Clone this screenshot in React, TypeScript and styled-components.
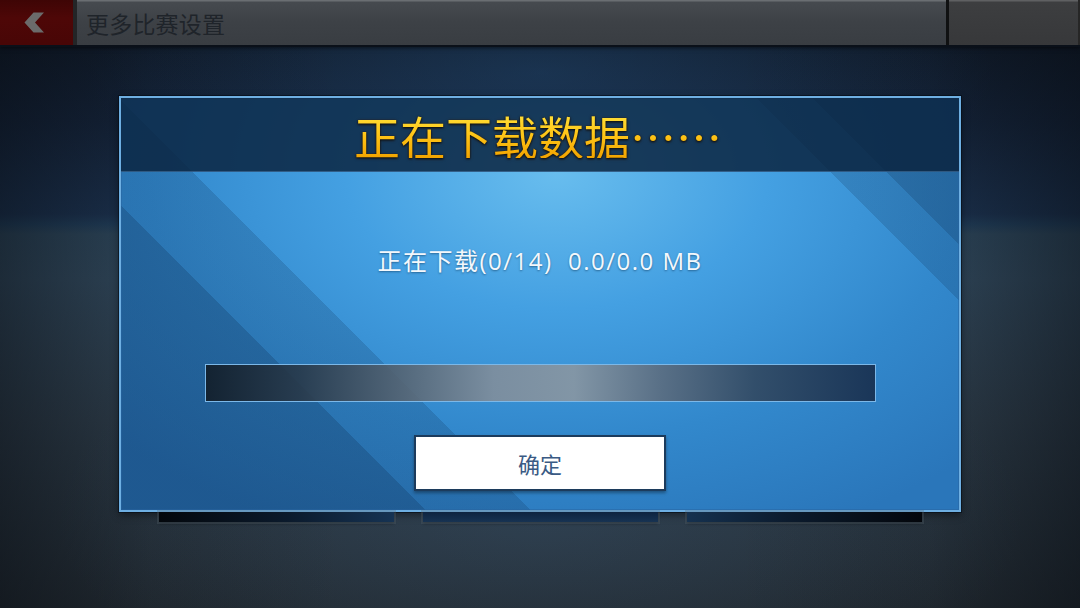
import React from "react";
import styled, { createGlobalStyle } from "styled-components";

const GlobalStyle = createGlobalStyle`
  html, body {
    margin: 0;
    padding: 0;
    width: 1080px;
    height: 608px;
    overflow: hidden;
  }
  body {
    font-family: "Noto Sans CJK SC", "Noto Sans", sans-serif;
    background: #121c28;
  }
`;

const CJK = `"Noto Sans CJK SC", "Noto Sans", sans-serif`;
const MIXED = `"Open Sans", "Noto Sans CJK SC", sans-serif`;

const Screen = styled.div`
  width: 1080px;
  height: 608px;
  display: flex;
  flex-direction: column;
  background:
    linear-gradient(
      90deg,
      rgba(6, 10, 16, 0.5) 0%,
      rgba(6, 10, 16, 0.12) 14%,
      rgba(6, 10, 16, 0) 32%,
      rgba(6, 10, 16, 0) 68%,
      rgba(6, 10, 16, 0.12) 86%,
      rgba(6, 10, 16, 0.5) 100%
    ),
    radial-gradient(ellipse 42% 26% at 50% 12%, rgba(40, 90, 140, 0.35), rgba(40, 90, 140, 0) 100%),
    radial-gradient(ellipse 45% 35% at 50% 85%, rgba(70, 110, 150, 0.22), rgba(70, 110, 150, 0) 100%),
    linear-gradient(
      180deg,
      #0e1621 0px,
      #15243a 120px,
      #1d3452 214px,
      #22405d 224px,
      #304a5f 234px,
      #344c60 280px,
      #2f3e4b 420px,
      #222a31 608px
    );
`;

/* ---------- top navigation bar ---------- */

const TopBar = styled.header`
  height: 45px;
  flex: none;
  display: flex;
  border-bottom: 2px solid #0a1019;
  box-shadow: 0 1px 4px rgba(0, 0, 0, 0.55);
`;

const BackButton = styled.button`
  width: 77px;
  box-sizing: border-box;
  margin: 0;
  padding: 0 0 0 24px;
  display: flex;
  align-items: center;
  border: none;
  border-right: 4px solid #232527;
  background: linear-gradient(180deg, #3e0505 0%, #4e0707 40%, #480606 100%);
  cursor: pointer;
`;

const TitleBar = styled.div`
  flex: 1;
  display: flex;
  align-items: center;
  padding-left: 9px;
  background: linear-gradient(180deg, #6a6e72 0, #6a6e72 1px, #464a4f 2px, #3d4146 50%, #393d42 100%);
  font-family: ${CJK};
  font-size: 23px;
  color: #1f242a;
  letter-spacing: 0.2px;
`;

const CornerBox = styled.div`
  width: 129px;
  border-left: 3px solid #101112;
  border-right: 2px solid #262626;
  background: linear-gradient(180deg, #5f6062 0, #5f6062 1px, #3d3e40 2px, #37383a 100%);
`;

/* ---------- dialog ---------- */

const Stage = styled.main`
  flex: 1;
  display: flex;
  flex-direction: column;
  align-items: center;
  padding-top: 49px;
`;

const Dialog = styled.section`
  width: 842px;
  height: 416px;
  box-sizing: border-box;
  border: 2px solid #6eafe2;
  display: flex;
  flex-direction: column;
  box-shadow:
    0 0 0 1px rgba(4, 12, 22, 0.6),
    0 3px 8px rgba(0, 0, 0, 0.45),
    inset 0 0 0 1px rgba(40, 100, 160, 0.5);
  background:
    linear-gradient(
      45deg,
      rgba(8, 32, 64, 0.34) 0%,
      rgba(8, 32, 64, 0.34) 24.4%,
      rgba(8, 32, 64, 0.17) 24.4%,
      rgba(8, 32, 64, 0.17) 32.8%,
      rgba(8, 32, 64, 0) 32.8%,
      rgba(8, 32, 64, 0) 83.8%,
      rgba(8, 32, 64, 0.17) 83.8%,
      rgba(8, 32, 64, 0.17) 88.3%,
      rgba(8, 32, 64, 0.32) 88.3%,
      rgba(8, 32, 64, 0.32) 100%
    ),
    radial-gradient(
      ellipse 72% 95% at 52% 18%,
      #68bdee 0%,
      #44a0e2 35%,
      #3288cc 68%,
      #2a76ba 100%
    );
`;

const DialogHeader = styled.div`
  height: 74px;
  flex: none;
  box-sizing: border-box;
  display: flex;
  align-items: center;
  justify-content: center;
  background: rgba(10, 34, 62, 0.84);
  border-bottom: 1px solid rgba(110, 170, 225, 0.35);
`;

const HeaderTitle = styled.h1`
  margin: 0 0 0 -4px;
  font-family: ${CJK};
  font-weight: 400;
  font-size: 46px;
  line-height: 1;
  background: linear-gradient(180deg, #ffe23c 0%, #ffc81a 45%, #f2a400 100%);
  -webkit-background-clip: text;
  background-clip: text;
  -webkit-text-fill-color: transparent;
  color: transparent;
  filter: drop-shadow(0 1px 1px rgba(0, 0, 0, 0.75)) drop-shadow(0 0 1px rgba(60, 30, 0, 0.6));
`;

const DialogBody = styled.div`
  flex: 1;
  display: flex;
  flex-direction: column;
  align-items: center;
`;

const StatusLine = styled.p`
  margin: 74px 0 0;
  height: 30px;
  line-height: 30px;
  font-family: ${MIXED};
  font-size: 24px;
  letter-spacing: 1.5px;
  color: #f4f8fc;
  white-space: pre;
  text-shadow: 0 1px 2px rgba(0, 30, 60, 0.45);
`;

const ProgressTrack = styled.div`
  margin-top: 88px;
  width: 671px;
  height: 38px;
  box-sizing: border-box;
  border: 1px solid #7cb8e8;
  background: linear-gradient(
    90deg,
    rgba(18, 30, 42, 0.93) 0%,
    rgba(40, 56, 72, 0.9) 14%,
    rgba(88, 102, 116, 0.9) 30%,
    rgba(128, 142, 156, 0.92) 43%,
    rgba(136, 150, 162, 0.92) 55%,
    rgba(92, 108, 126, 0.9) 68%,
    rgba(50, 72, 96, 0.9) 82%,
    rgba(24, 48, 80, 0.93) 100%
  );
`;

const ConfirmButton = styled.button`
  margin-top: 33px;
  width: 252px;
  height: 56px;
  box-sizing: border-box;
  border: 2px solid #1c3b5c;
  background: #ffffff;
  box-shadow: 0 2px 3px rgba(0, 0, 0, 0.35);
  font-family: ${CJK};
  font-size: 22px;
  color: #3a5a84;
  padding: 0;
  cursor: pointer;
`;

/* ---------- tabs peeking out below the dialog ---------- */

const TabRow = styled.div`
  display: flex;
  gap: 29px;
`;

const Tab = styled.div<{ $shade: string }>`
  width: 235px;
  height: 10px;
  background: ${(p) => p.$shade};
  box-shadow: 0 0 0 2px rgba(90, 102, 114, 0.3), 0 2px 3px rgba(0, 0, 0, 0.3);
`;

const tabShades = [
  "linear-gradient(90deg, #03070c 0%, #0b1a2c 55%, #163353 100%)",
  "linear-gradient(180deg, #0e2440 0%, #173352 100%)",
  "linear-gradient(90deg, #15314f 0%, #0b1a2c 45%, #03060b 100%)",
];

function ChevronLeft() {
  return (
    <svg width="21" height="21" viewBox="0 0 21 21" aria-hidden="true">
      <polygon points="9.5,0.5 20,0.5 11,10.5 20,20.5 9.5,20.5 0.5,10.5" fill="#6b6b6b" />
    </svg>
  );
}

export default function App() {
  return (
    <>
      <GlobalStyle />
      <Screen>
        <TopBar>
          <BackButton aria-label="返回">
            <ChevronLeft />
          </BackButton>
          <TitleBar>更多比赛设置</TitleBar>
          <CornerBox />
        </TopBar>
        <Stage>
          <Dialog>
            <DialogHeader>
              <HeaderTitle>正在下载数据……</HeaderTitle>
            </DialogHeader>
            <DialogBody>
              <StatusLine>{"正在下载(0/14)  0.0/0.0 MB"}</StatusLine>
              <ProgressTrack />
              <ConfirmButton>确定</ConfirmButton>
            </DialogBody>
          </Dialog>
          <TabRow>
            {tabShades.map((s, i) => (
              <Tab key={i} $shade={s} />
            ))}
          </TabRow>
        </Stage>
      </Screen>
    </>
  );
}
